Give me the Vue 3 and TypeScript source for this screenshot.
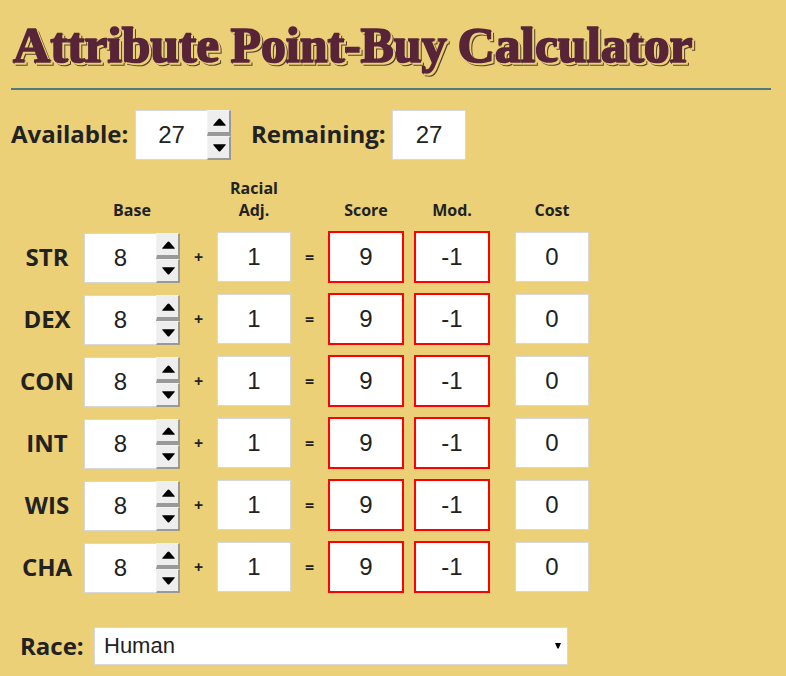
<script setup lang="ts">
import { computed, reactive, ref } from 'vue'

interface Attribute {
  name: string
  base: number
  racial: number
}

const available = ref(27)
const race = ref('Human')
const attributes = reactive<Attribute[]>(
  ['STR', 'DEX', 'CON', 'INT', 'WIS', 'CHA'].map((name) => ({ name, base: 8, racial: 1 })),
)

const costs: Record<number, number> = { 8: 0, 9: 1, 10: 2, 11: 3, 12: 4, 13: 5, 14: 7, 15: 9 }
const cost = (a: Attribute): number => costs[a.base] ?? 0
const score = (a: Attribute): number => a.base + a.racial
const modifier = (a: Attribute): number => Math.floor((score(a) - 10) / 2)
const remaining = computed(() => available.value - attributes.reduce((sum, a) => sum + cost(a), 0))

function step(a: Attribute, by: number): void {
  a.base = Math.min(15, Math.max(8, a.base + by))
}
</script>

<template>
  <main class="page">
    <h1 class="title">
      <svg class="title-art" width="760" height="77" viewBox="0 0 760 77">
        <text x="2" y="61.5" textLength="206" lengthAdjust="spacingAndGlyphs">Attribute</text>
        <text x="219.5" y="61.5" textLength="216" lengthAdjust="spacingAndGlyphs">Point-Buy</text>
        <text x="446.5" y="61.5" textLength="235" lengthAdjust="spacingAndGlyphs">Calculator</text>
      </svg>
    </h1>

    <section class="totals">
      <span class="label available">Available:</span>
      <div class="spinner">
        <span class="value">{{ available }}</span>
        <div class="steps">
          <button class="step" @click="available++"><svg width="13" height="8"><path d="M.3 7.7V7L5.5 1Q6.5 0 7.5 1L12.7 7V7.7Z" /></svg></button>
          <button class="step down" @click="available--"><svg width="13" height="8"><path d="M.3.3H12.7V1L7.5 7Q6.5 8 5.5 7L.3 1Z" /></svg></button>
        </div>
      </div>
      <span class="label remaining">Remaining:</span>
      <div class="field">{{ remaining }}</div>
    </section>

    <section class="grid headings">
      <span></span><span>Base</span><span></span><span>Racial<br />Adj.</span><span></span>
      <span>Score</span><span></span><span>Mod.</span><span></span><span>Cost</span>
    </section>

    <section v-for="a in attributes" :key="a.name" class="grid row">
      <span class="label">{{ a.name }}</span>
      <div class="spinner lowered">
        <span class="value">{{ a.base }}</span>
        <div class="steps">
          <button class="step" @click="step(a, 1)"><svg width="13" height="8"><path d="M.3 7.7V7L5.5 1Q6.5 0 7.5 1L12.7 7V7.7Z" /></svg></button>
          <button class="step down" @click="step(a, -1)"><svg width="13" height="8"><path d="M.3.3H12.7V1L7.5 7Q6.5 8 5.5 7L.3 1Z" /></svg></button>
        </div>
      </div>
      <span class="operator">+</span>
      <div class="field">{{ a.racial }}</div>
      <span class="operator">=</span>
      <div class="field" :class="{ low: score(a) < 10 }">{{ score(a) }}</div>
      <span></span>
      <div class="field" :class="{ low: modifier(a) < 0 }">{{ modifier(a) }}</div>
      <span></span>
      <div class="field">{{ cost(a) }}</div>
    </section>

    <section class="race">
      <span class="label">Race:</span>
      <div class="select">
        <span>{{ race }}</span>
        <svg width="6" height="6"><path d="M0 0H6L3.6 5.5H2.4Z" /></svg>
      </div>
    </section>
  </main>
</template>

<style>
body {
  background: #ebd077;
}
</style>

<style scoped>
.page {
  box-sizing: border-box;
  width: 786px;
  height: 676px;
  padding: 0 15px 0 11px;
  overflow: hidden;
  background: #ebd077;
  color: #222;
  font-family: 'Open Sans', sans-serif;
}
.title {
  box-sizing: border-box;
  height: 90px;
  margin: 0;
  border-bottom: 2px solid #527a7a;
}
.title-art {
  display: block;
  overflow: visible;
  font: bold 51px 'Liberation Serif', serif;
  fill: #582438;
  stroke: #582438;
  stroke-width: 1.7px;
  filter: drop-shadow(2px 2px 0 #ebd077) drop-shadow(1px 1px 0 #55422f);
}
.totals {
  display: flex;
  height: 50px;
  padding-top: 20px;
}
.label {
  font-size: 24px;
  font-weight: 700;
  line-height: 48px;
  white-space: nowrap;
}
.available {
  width: 124px;
}
.remaining {
  width: 141px;
  margin-left: 20px;
}
.field,
.spinner {
  box-sizing: border-box;
  height: 50px;
  border: 1px solid #d8d8d8;
  background: #fff;
  font: 24px/48px 'Liberation Sans', Arial, sans-serif;
  text-align: center;
}
.field {
  width: 74px;
}
.field.low {
  width: 76px;
  height: 52px;
  margin-top: -1px;
  border: 2px solid #f00;
}
.spinner {
  display: flex;
  width: 96px;
  border-width: 1px 0 1px 1px;
}
.value {
  width: 71px;
}
.steps {
  width: 24px;
  height: 50px;
  margin-top: -1px;
}
.step {
  display: flex;
  align-items: center;
  justify-content: center;
  box-sizing: border-box;
  width: 24px;
  height: 26px;
  margin: 0;
  padding: 1px 0 0 1px;
  border: 1px solid #f3f3f3;
  border-width: 1px 2px 4px 1px;
  border-color: #f3f3f3 #999 #999 #f3f3f3;
  background: #eee;
}
.step.down {
  height: 24px;
  border-width: 1px 2px 2px 1px;
}
.grid {
  display: grid;
  grid-template-columns: 73px 96px 37px 74px 37px 76px 10px 76px 25px 74px;
}
.headings {
  align-items: end;
  box-sizing: border-box;
  height: 72px;
  padding-bottom: 11px;
  font-size: 16px;
  font-weight: 700;
  line-height: 22px;
  text-align: center;
}
.row {
  height: 62px;
  text-align: center;
}
.row .label {
  padding-right: 1px;
  line-height: 50px;
}
.lowered {
  margin-top: 1px;
}
.operator {
  font-size: 16px;
  font-weight: 700;
  line-height: 50px;
}
.race {
  display: flex;
  padding: 23px 0 0 9px;
}
.race .label {
  width: 74px;
  line-height: 38px;
}
.select {
  display: flex;
  align-items: center;
  justify-content: space-between;
  box-sizing: border-box;
  width: 474px;
  height: 38px;
  padding: 0 6px 0 9px;
  border: 1px solid #d8d8d8;
  background: #fff;
  font: 22px/34px 'Liberation Sans', Arial, sans-serif;
}
</style>
